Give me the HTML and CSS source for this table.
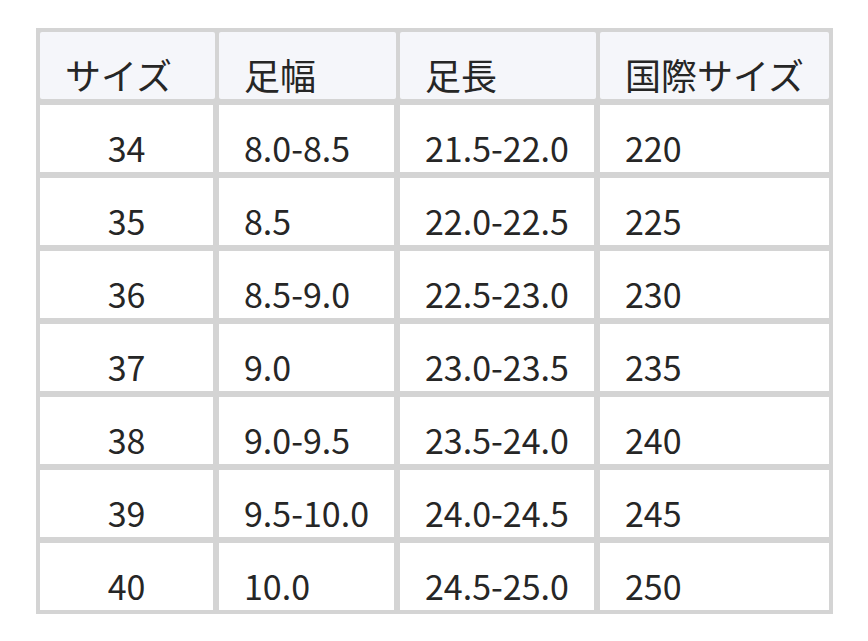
FILE: index.html
```html
<!DOCTYPE html>
<html lang="ja">
<head>
<meta charset="utf-8">
<title>サイズ表</title>
<link rel="stylesheet" href="styles.css">
</head>
<body>
<div class="size-table">
  <div class="head">
    <div class="cell">サイズ</div>
    <div class="cell">足幅</div>
    <div class="cell">足長</div>
    <div class="cell">国際サイズ</div>
  </div>
  <div class="row"><div class="cell num">34</div><div class="cell">8.0-8.5</div><div class="cell">21.5-22.0</div><div class="cell">220</div></div>
  <div class="row"><div class="cell num">35</div><div class="cell">8.5</div><div class="cell">22.0-22.5</div><div class="cell">225</div></div>
  <div class="row"><div class="cell num">36</div><div class="cell">8.5-9.0</div><div class="cell">22.5-23.0</div><div class="cell">230</div></div>
  <div class="row"><div class="cell num">37</div><div class="cell">9.0</div><div class="cell">23.0-23.5</div><div class="cell">235</div></div>
  <div class="row"><div class="cell num">38</div><div class="cell">9.0-9.5</div><div class="cell">23.5-24.0</div><div class="cell">240</div></div>
  <div class="row"><div class="cell num">39</div><div class="cell">9.5-10.0</div><div class="cell">24.0-24.5</div><div class="cell">245</div></div>
  <div class="row"><div class="cell num">40</div><div class="cell">10.0</div><div class="cell">24.5-25.0</div><div class="cell">250</div></div>
</div>
</body>
</html>
```
FILE: styles.css
```css
html, body {
  margin: 0;
  padding: 0;
  background: #ffffff;
}
body {
  font-family: "Noto Sans CJK JP", "Noto Sans", sans-serif;
  color: #262626;
}
.size-table {
  margin: 28px 0 0 36px;
  width: 797px;
  box-sizing: border-box;
  padding: 4px;
  background: #d4d4d4;
  display: flex;
  flex-direction: column;
  gap: 6px;
}
.head {
  display: grid;
  grid-template-columns: 175px 177px 196px 229px;
  column-gap: 4px;
}
.row {
  display: grid;
  grid-template-columns: 173px 175px 194px 229px;
  column-gap: 6px;
}
.cell {
  height: 67px;
  box-sizing: border-box;
  padding: 26px 0 0 25px;
  font-size: 34px;
  line-height: 34px;
  background: #ffffff;
  white-space: nowrap;
}
.head .cell {
  padding-top: 24px;
  font-size: 36px;
  line-height: 36px;
  background: #f5f6fa;
  border-radius: 2px;
}
.cell.num {
  padding-left: 0;
  text-align: center;
}
```
